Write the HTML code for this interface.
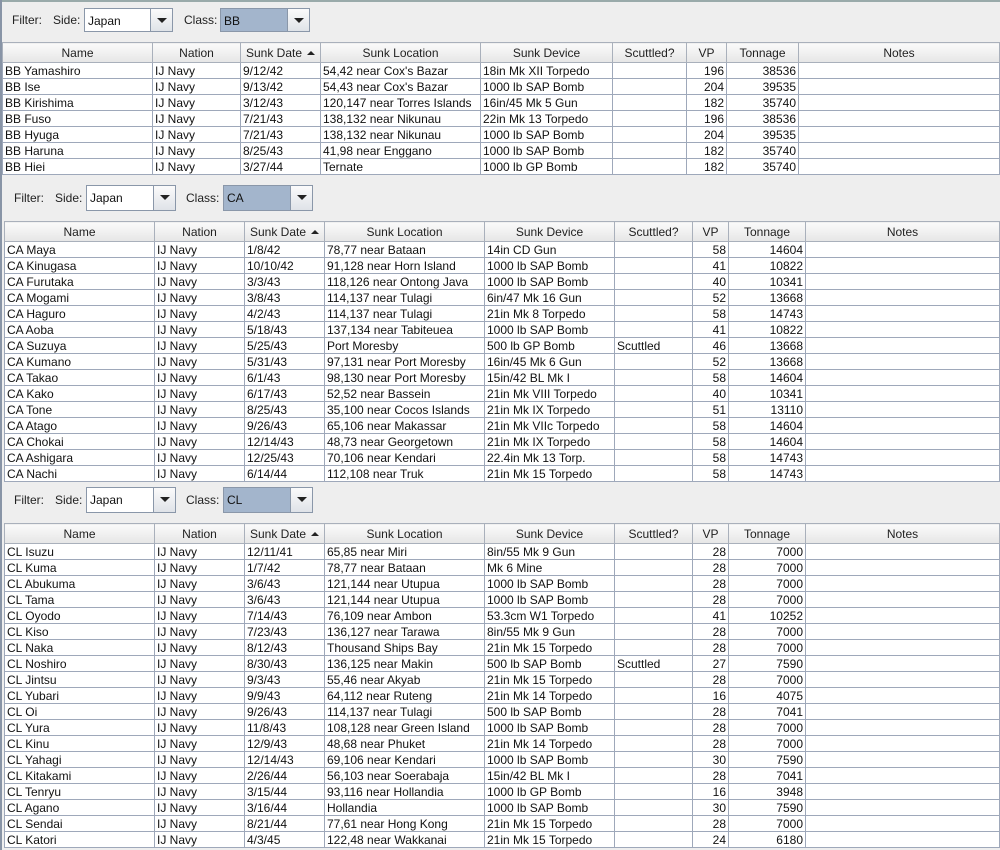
<!DOCTYPE html>
<html><head><meta charset="utf-8"><style>
*{margin:0;padding:0;box-sizing:border-box}
body{width:1000px;height:850px;background:#eeeeee;font-family:"Liberation Sans",Arial,sans-serif;font-size:12px;color:#111;position:relative;overflow:hidden}
.bar{position:absolute;left:0;height:30px}
.lbl{position:absolute;font-weight:normal;color:#222;top:7px}
.combo{position:absolute;top:0;height:24px;border:1px solid #8a97a9;background:#fff;}
.combo span{position:absolute;left:3px;top:5px}
.combo.sel{background:#a3b5cc}
.combo .arr{position:absolute;right:0;top:0;width:22px;height:22px;border-left:1px solid #8a97a9;background:linear-gradient(#fbfbfb,#dfe3e8)}
.combo .arr:after{content:"";position:absolute;left:6px;top:9px;border-left:5px solid transparent;border-right:5px solid transparent;border-top:5px solid #222}
table{position:absolute;border-collapse:collapse;table-layout:fixed;background:#fff}
td,th{height:16px;border:1px solid #9ea8ba;padding:0 2px;white-space:nowrap;overflow:hidden;font-weight:normal;line-height:14px}
th{height:20px;background:linear-gradient(#fafafa,#e6e6e6);color:#222;border-color:#a9b0bb}
td.r{text-align:right}
.up{display:inline-block;border-left:4px solid transparent;border-right:4px solid transparent;border-bottom:4px solid #222;margin-left:5px;vertical-align:2px}
.frame{position:absolute;left:0;width:1000px;border-top:1px solid #888;}
</style></head><body>
<div style="position:absolute;left:0;top:0;width:1000px;height:2px;background:#9aa"></div>
<div style="position:absolute;left:0;top:0;width:2px;height:850px;background:#8894a6"></div>

<div class="bar" style="top:8px">
<div class="lbl" style="left:12px;top:5px">Filter:</div><div class="lbl" style="left:53px;top:5px">Side:</div>
<div class="combo" style="left:84px;width:89px"><span>Japan</span><div class="arr"></div></div>
<div class="lbl" style="left:184px;top:5px">Class:</div>
<div class="combo sel" style="left:220px;width:90px"><span>BB</span><div class="arr"></div></div>
</div>
<table style="left:2px;top:42px;width:998px">
<colgroup><col style="width:150px"><col style="width:88px"><col style="width:80px"><col style="width:160px"><col style="width:132px"><col style="width:74px"><col style="width:40px"><col style="width:72px"><col></colgroup>
<tr><th>Name</th><th>Nation</th><th>Sunk Date<i class="up"></i></th><th>Sunk Location</th><th>Sunk Device</th><th>Scuttled?</th><th>VP</th><th>Tonnage</th><th>Notes</th></tr>
<tr><td>BB Yamashiro</td><td>IJ Navy</td><td>9/12/42</td><td>54,42 near Cox's Bazar</td><td>18in Mk XII Torpedo</td><td></td><td class="r">196</td><td class="r">38536</td><td></td></tr>
<tr><td>BB Ise</td><td>IJ Navy</td><td>9/13/42</td><td>54,43 near Cox's Bazar</td><td>1000 lb SAP Bomb</td><td></td><td class="r">204</td><td class="r">39535</td><td></td></tr>
<tr><td>BB Kirishima</td><td>IJ Navy</td><td>3/12/43</td><td>120,147 near Torres Islands</td><td>16in/45 Mk 5  Gun</td><td></td><td class="r">182</td><td class="r">35740</td><td></td></tr>
<tr><td>BB Fuso</td><td>IJ Navy</td><td>7/21/43</td><td>138,132 near Nikunau</td><td>22in Mk 13 Torpedo</td><td></td><td class="r">196</td><td class="r">38536</td><td></td></tr>
<tr><td>BB Hyuga</td><td>IJ Navy</td><td>7/21/43</td><td>138,132 near Nikunau</td><td>1000 lb SAP Bomb</td><td></td><td class="r">204</td><td class="r">39535</td><td></td></tr>
<tr><td>BB Haruna</td><td>IJ Navy</td><td>8/25/43</td><td>41,98 near Enggano</td><td>1000 lb SAP Bomb</td><td></td><td class="r">182</td><td class="r">35740</td><td></td></tr>
<tr><td>BB Hiei</td><td>IJ Navy</td><td>3/27/44</td><td>Ternate</td><td>1000 lb GP Bomb</td><td></td><td class="r">182</td><td class="r">35740</td><td></td></tr>
</table>

<div class="bar" style="top:185px">
<div class="lbl" style="left:14px;top:6px">Filter:</div><div class="lbl" style="left:55px;top:6px">Side:</div>
<div class="combo" style="left:86px;width:90px;height:26px"><span>Japan</span><div class="arr" style="height:24px"></div></div>
<div class="lbl" style="left:186px;top:6px">Class:</div>
<div class="combo sel" style="left:223px;width:90px;height:26px"><span>CA</span><div class="arr" style="height:24px"></div></div>
</div>
<table style="left:4px;top:221px;width:996px">
<colgroup><col style="width:150px"><col style="width:90px"><col style="width:80px"><col style="width:160px"><col style="width:130px"><col style="width:78px"><col style="width:36px"><col style="width:77px"><col></colgroup>
<tr><th>Name</th><th>Nation</th><th>Sunk Date<i class="up"></i></th><th>Sunk Location</th><th>Sunk Device</th><th>Scuttled?</th><th>VP</th><th>Tonnage</th><th>Notes</th></tr>
<tr><td>CA Maya</td><td>IJ Navy</td><td>1/8/42</td><td>78,77 near Bataan</td><td>14in CD Gun</td><td></td><td class="r">58</td><td class="r">14604</td><td></td></tr>
<tr><td>CA Kinugasa</td><td>IJ Navy</td><td>10/10/42</td><td>91,128 near Horn Island</td><td>1000 lb SAP Bomb</td><td></td><td class="r">41</td><td class="r">10822</td><td></td></tr>
<tr><td>CA Furutaka</td><td>IJ Navy</td><td>3/3/43</td><td>118,126 near Ontong Java</td><td>1000 lb SAP Bomb</td><td></td><td class="r">40</td><td class="r">10341</td><td></td></tr>
<tr><td>CA Mogami</td><td>IJ Navy</td><td>3/8/43</td><td>114,137 near Tulagi</td><td>6in/47 Mk 16 Gun</td><td></td><td class="r">52</td><td class="r">13668</td><td></td></tr>
<tr><td>CA Haguro</td><td>IJ Navy</td><td>4/2/43</td><td>114,137 near Tulagi</td><td>21in Mk 8 Torpedo</td><td></td><td class="r">58</td><td class="r">14743</td><td></td></tr>
<tr><td>CA Aoba</td><td>IJ Navy</td><td>5/18/43</td><td>137,134 near Tabiteuea</td><td>1000 lb SAP Bomb</td><td></td><td class="r">41</td><td class="r">10822</td><td></td></tr>
<tr><td>CA Suzuya</td><td>IJ Navy</td><td>5/25/43</td><td>Port Moresby</td><td>500 lb GP Bomb</td><td>Scuttled</td><td class="r">46</td><td class="r">13668</td><td></td></tr>
<tr><td>CA Kumano</td><td>IJ Navy</td><td>5/31/43</td><td>97,131 near Port Moresby</td><td>16in/45 Mk 6 Gun</td><td></td><td class="r">52</td><td class="r">13668</td><td></td></tr>
<tr><td>CA Takao</td><td>IJ Navy</td><td>6/1/43</td><td>98,130 near Port Moresby</td><td>15in/42 BL Mk I</td><td></td><td class="r">58</td><td class="r">14604</td><td></td></tr>
<tr><td>CA Kako</td><td>IJ Navy</td><td>6/17/43</td><td>52,52 near Bassein</td><td>21in Mk VIII Torpedo</td><td></td><td class="r">40</td><td class="r">10341</td><td></td></tr>
<tr><td>CA Tone</td><td>IJ Navy</td><td>8/25/43</td><td>35,100 near Cocos Islands</td><td>21in Mk IX Torpedo</td><td></td><td class="r">51</td><td class="r">13110</td><td></td></tr>
<tr><td>CA Atago</td><td>IJ Navy</td><td>9/26/43</td><td>65,106 near Makassar</td><td>21in Mk VIIc Torpedo</td><td></td><td class="r">58</td><td class="r">14604</td><td></td></tr>
<tr><td>CA Chokai</td><td>IJ Navy</td><td>12/14/43</td><td>48,73 near Georgetown</td><td>21in Mk IX Torpedo</td><td></td><td class="r">58</td><td class="r">14604</td><td></td></tr>
<tr><td>CA Ashigara</td><td>IJ Navy</td><td>12/25/43</td><td>70,106 near Kendari</td><td>22.4in Mk 13 Torp.</td><td></td><td class="r">58</td><td class="r">14743</td><td></td></tr>
<tr><td>CA Nachi</td><td>IJ Navy</td><td>6/14/44</td><td>112,108 near Truk</td><td>21in Mk 15 Torpedo</td><td></td><td class="r">58</td><td class="r">14743</td><td></td></tr>
</table>

<div class="bar" style="top:487px">
<div class="lbl" style="left:14px;top:6px">Filter:</div><div class="lbl" style="left:55px;top:6px">Side:</div>
<div class="combo" style="left:86px;width:90px;height:26px"><span>Japan</span><div class="arr" style="height:24px"></div></div>
<div class="lbl" style="left:186px;top:6px">Class:</div>
<div class="combo sel" style="left:223px;width:90px;height:26px"><span>CL</span><div class="arr" style="height:24px"></div></div>
</div>
<table style="left:4px;top:523px;width:996px">
<colgroup><col style="width:150px"><col style="width:90px"><col style="width:80px"><col style="width:160px"><col style="width:130px"><col style="width:78px"><col style="width:36px"><col style="width:77px"><col></colgroup>
<tr><th>Name</th><th>Nation</th><th>Sunk Date<i class="up"></i></th><th>Sunk Location</th><th>Sunk Device</th><th>Scuttled?</th><th>VP</th><th>Tonnage</th><th>Notes</th></tr>
<tr><td>CL Isuzu</td><td>IJ Navy</td><td>12/11/41</td><td>65,85 near Miri</td><td>8in/55 Mk 9 Gun</td><td></td><td class="r">28</td><td class="r">7000</td><td></td></tr>
<tr><td>CL Kuma</td><td>IJ Navy</td><td>1/7/42</td><td>78,77 near Bataan</td><td>Mk 6 Mine</td><td></td><td class="r">28</td><td class="r">7000</td><td></td></tr>
<tr><td>CL Abukuma</td><td>IJ Navy</td><td>3/6/43</td><td>121,144 near Utupua</td><td>1000 lb SAP Bomb</td><td></td><td class="r">28</td><td class="r">7000</td><td></td></tr>
<tr><td>CL Tama</td><td>IJ Navy</td><td>3/6/43</td><td>121,144 near Utupua</td><td>1000 lb SAP Bomb</td><td></td><td class="r">28</td><td class="r">7000</td><td></td></tr>
<tr><td>CL Oyodo</td><td>IJ Navy</td><td>7/14/43</td><td>76,109 near Ambon</td><td>53.3cm W1 Torpedo</td><td></td><td class="r">41</td><td class="r">10252</td><td></td></tr>
<tr><td>CL Kiso</td><td>IJ Navy</td><td>7/23/43</td><td>136,127 near Tarawa</td><td>8in/55 Mk 9 Gun</td><td></td><td class="r">28</td><td class="r">7000</td><td></td></tr>
<tr><td>CL Naka</td><td>IJ Navy</td><td>8/12/43</td><td>Thousand Ships Bay</td><td>21in Mk 15 Torpedo</td><td></td><td class="r">28</td><td class="r">7000</td><td></td></tr>
<tr><td>CL Noshiro</td><td>IJ Navy</td><td>8/30/43</td><td>136,125 near Makin</td><td>500 lb SAP Bomb</td><td>Scuttled</td><td class="r">27</td><td class="r">7590</td><td></td></tr>
<tr><td>CL Jintsu</td><td>IJ Navy</td><td>9/3/43</td><td>55,46 near Akyab</td><td>21in Mk 15 Torpedo</td><td></td><td class="r">28</td><td class="r">7000</td><td></td></tr>
<tr><td>CL Yubari</td><td>IJ Navy</td><td>9/9/43</td><td>64,112 near Ruteng</td><td>21in Mk 14 Torpedo</td><td></td><td class="r">16</td><td class="r">4075</td><td></td></tr>
<tr><td>CL Oi</td><td>IJ Navy</td><td>9/26/43</td><td>114,137 near Tulagi</td><td>500 lb SAP Bomb</td><td></td><td class="r">28</td><td class="r">7041</td><td></td></tr>
<tr><td>CL Yura</td><td>IJ Navy</td><td>11/8/43</td><td>108,128 near Green Island</td><td>1000 lb SAP Bomb</td><td></td><td class="r">28</td><td class="r">7000</td><td></td></tr>
<tr><td>CL Kinu</td><td>IJ Navy</td><td>12/9/43</td><td>48,68 near Phuket</td><td>21in Mk 14 Torpedo</td><td></td><td class="r">28</td><td class="r">7000</td><td></td></tr>
<tr><td>CL Yahagi</td><td>IJ Navy</td><td>12/14/43</td><td>69,106 near Kendari</td><td>1000 lb SAP Bomb</td><td></td><td class="r">30</td><td class="r">7590</td><td></td></tr>
<tr><td>CL Kitakami</td><td>IJ Navy</td><td>2/26/44</td><td>56,103 near Soerabaja</td><td>15in/42 BL Mk I</td><td></td><td class="r">28</td><td class="r">7041</td><td></td></tr>
<tr><td>CL Tenryu</td><td>IJ Navy</td><td>3/15/44</td><td>93,116 near Hollandia</td><td>1000 lb GP Bomb</td><td></td><td class="r">16</td><td class="r">3948</td><td></td></tr>
<tr><td>CL Agano</td><td>IJ Navy</td><td>3/16/44</td><td>Hollandia</td><td>1000 lb SAP Bomb</td><td></td><td class="r">30</td><td class="r">7590</td><td></td></tr>
<tr><td>CL Sendai</td><td>IJ Navy</td><td>8/21/44</td><td>77,61 near Hong Kong</td><td>21in Mk 15 Torpedo</td><td></td><td class="r">28</td><td class="r">7000</td><td></td></tr>
<tr><td>CL Katori</td><td>IJ Navy</td><td>4/3/45</td><td>122,48 near Wakkanai</td><td>21in Mk 15 Torpedo</td><td></td><td class="r">24</td><td class="r">6180</td><td></td></tr>
</table>
</body></html>
